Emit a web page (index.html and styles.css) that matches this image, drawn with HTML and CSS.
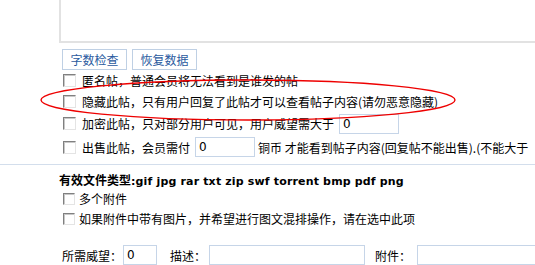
FILE: index.html
```html
<!DOCTYPE html>
<html lang="zh-CN">
<head>
    <meta charset="UTF-8">
    <title>发表帖子</title>
    <link rel="stylesheet" href="styles.css">
</head>
<body>
    <!-- 编辑区 -->
    <div class="editor"></div>
    <div class="tools">
        <button class="btn">字数检查</button>
        <button class="btn">恢复数据</button>
    </div>

    <!-- 帖子选项 -->
    <div class="options">
        <div class="opt"><span class="box"></span>匿名帖，普通会员将无法看到是谁发的帖</div>
        <div class="opt"><span class="box"></span>隐藏此帖，只有用户回复了此帖才可以查看帖子内容(请勿恶意隐藏)</div>
        <div class="opt opt-key"><span class="box"></span>加密此帖，只对部分用户可见，用户威望需大于<input class="field f-key" type="text" value="0"></div>
        <div class="opt opt-sell"><span class="box"></span>出售此帖，会员需付<input class="field f-sell" type="text" value="0"><span class="after">铜币 才能看到帖子内容(回复帖不能出售).(不能大于</span></div>
    </div>

    <!-- 附件 -->
    <div class="attach">
        <div class="types">有效文件类型<span class="ext">:gif jpg rar txt zip swf torrent bmp pdf png</span></div>
        <div class="att-opt"><span class="box box-sm"></span>多个附件</div>
        <div class="att-opt att-opt2"><span class="box box-sm"></span>如果附件中带有图片，并希望进行图文混排操作，请在选中此项</div>
        <div class="att-row">
            <label>所需威望：</label><input class="field f-rep" type="text" value="0">
            <label class="lbl-desc">描述：</label><input class="field f-desc" type="text">
            <label class="lbl-file">附件：</label><input class="field f-file" type="text">
        </div>
    </div>

    <!-- 红圈标注 -->
    <svg class="mark" width="535" height="265" viewBox="0 0 535 265">
        <ellipse cx="248" cy="100" rx="207" ry="20" fill="none" stroke="#ee0000" stroke-width="1.4"/>
    </svg>
</body>
</html>
```

FILE: styles.css
```css
body {
    margin: 0;
    font-family: "Noto Sans CJK SC", sans-serif;
    font-size: 12px;
    color: #000;
    background: #fff;
    white-space: nowrap;
    overflow: hidden;
    position: relative;
    height: 265px;
}
.editor {
    margin-left: 59px;
    height: 41px;
    border-left: 2px solid #e2e2e2;
    border-bottom: 2px solid #e2e2e2;
}
.tools {
    display: flex;
    gap: 5px;
    margin: 6px 0 0 62px;
}
.btn {
    width: 65px;
    height: 21px;
    padding: 0;
    border: 1px solid #bfd0e4;
    background: #fff;
    color: #2a5a9e;
    font-family: "Noto Sans CJK SC", sans-serif;
    font-size: 12px;
    line-height: 19px;
}
.options {
    padding-left: 63px;
}
.opt {
    display: flex;
    align-items: center;
    height: 21px;
    line-height: 21px;
}
.opt-key {
    height: 23px;
}
.opt-sell {
    height: 24px;
}
.box {
    display: inline-block;
    box-sizing: border-box;
    width: 13px;
    height: 13px;
    margin-right: 6px;
    background: #fff;
    border: 1px solid;
    border-color: #808080 #e4e4e4 #e4e4e4 #808080;
    box-shadow: inset 1px 1px 0 #c8c8c8;
}
.box-sm {
    width: 12px;
    height: 12px;
    margin-right: 4px;
}
.field {
    box-sizing: border-box;
    height: 20px;
    padding: 0 3px;
    border: 1px solid #c6d5e8;
    background: #fff;
    font-family: "DejaVu Sans", sans-serif;
    font-size: 12px;
    outline: none;
}
.f-key {
    width: 60px;
    margin-left: 5px;
}
.f-sell {
    width: 60px;
    margin-left: 5px;
}
.after {
    margin-left: 3px;
}
.attach {
    margin-top: 5px;
    border-top: 1px solid #d3deec;
    padding-left: 59px;
}
.types {
    padding-top: 6px;
    height: 18px;
    line-height: 18px;
    font-weight: bold;
}
.ext {
    font-family: "DejaVu Sans", sans-serif;
    font-size: 11px;
    letter-spacing: 0.16px;
}
.att-opt {
    display: flex;
    align-items: center;
    height: 19px;
    padding-left: 4px;
}
.att-opt2 {
    height: 21px;
}
.att-row {
    display: flex;
    align-items: center;
    margin: 16px 0 0 3px;
}
.att-row label {
    margin-right: 1px;
}
.f-rep {
    width: 34px;
}
.lbl-desc {
    margin-left: 13px;
}
.f-desc {
    width: 156px;
    margin-left: 2px;
}
.lbl-file {
    margin-left: 10px;
}
.f-file {
    width: 130px;
    margin-left: 5px;
}
.mark {
    position: absolute;
    left: 0;
    top: 0;
    pointer-events: none;
}
```
